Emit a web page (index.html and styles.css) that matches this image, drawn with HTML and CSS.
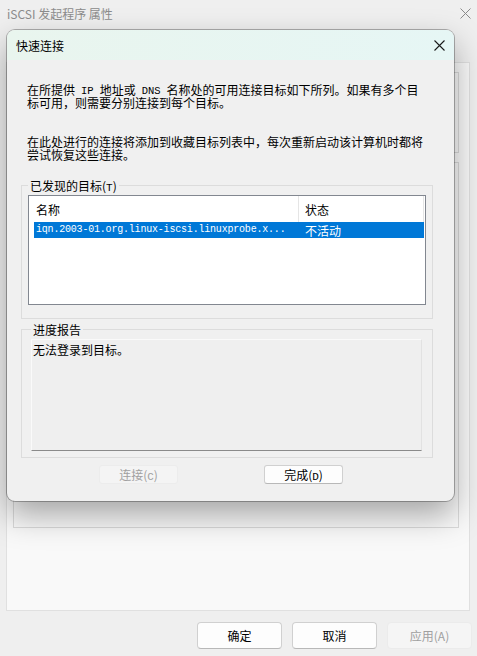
FILE: index.html
```html
<!DOCTYPE html>
<html lang="zh-CN">
<head>
    <meta charset="UTF-8">
    <meta name="viewport" content="width=device-width, initial-scale=1.0">
    <title>iSCSI 发起程序 属性</title>
    <link rel="stylesheet" href="styles.css">
</head>
<body>
    <div class="window">
        <div class="titlebar">
            <span class="title">iSCSI 发起程序 属性</span>
            <svg class="close close-bg" width="11" height="11" viewBox="0 0 11 11">
                <path d="M0.5 0.5 L10.5 10.5 M10.5 0.5 L0.5 10.5" stroke="#8a8a8a" stroke-width="1" fill="none"/>
            </svg>
        </div>
        <div class="panel">
            <div class="bg-group bg-group-top"></div>
            <div class="bg-group bg-group-main"></div>
        </div>
        <div class="footer">
            <button class="btn">确定</button>
            <button class="btn">取消</button>
            <button class="btn" disabled>应用(A)</button>
        </div>

        <div class="dialog">
            <div class="dialog-titlebar">
                <span class="dialog-title">快速连接</span>
                <svg class="close" width="11" height="11" viewBox="0 0 11 11">
                    <path d="M0.5 0.5 L10.5 10.5 M10.5 0.5 L0.5 10.5" stroke="#1a1a1a" stroke-width="1.1" fill="none"/>
                </svg>
            </div>
            <div class="dialog-body">
                <p class="intro">在所提供<span class="mono word">IP</span>地址或<span class="mono word">DNS</span>名称处的可用连接目标如下所列。如果有多个目<br>标可用，则需要分别连接到每个目标。</p>
                <p class="intro second">在此处进行的连接将添加到收藏目标列表中，每次重新启动该计算机时都将<br>尝试恢复这些连接。</p>

                <fieldset class="group">
                    <legend>已发现的目标(<span class="mono">T</span>)</legend>
                    <div class="listbox">
                        <div class="list-header">
                            <span class="col-name">名称</span>
                            <span class="col-state">状态</span>
                        </div>
                        <div class="list-row selected">
                            <span class="col-name mono">iqn.2003-01.org.linux-iscsi.linuxprobe.x...</span>
                            <span class="col-state">不活动</span>
                        </div>
                    </div>
                </fieldset>

                <fieldset class="group progress">
                    <legend>进度报告</legend>
                    <div class="report">无法登录到目标。</div>
                </fieldset>

                <div class="dialog-actions">
                    <button class="btn small" disabled>连接(<span class="mono">C</span>)</button>
                    <button class="btn small">完成(<span class="mono">D</span>)</button>
                </div>
            </div>
        </div>
    </div>
</body>
</html>
```

FILE: styles.css
```css
* {
    box-sizing: border-box;
}

body {
    margin: 0;
    font-family: "Noto Sans CJK SC", "Liberation Sans", sans-serif;
    font-size: 12px;
    color: #000;
    background-color: #efefef;
}

.window {
    position: relative;
    width: 477px;
    height: 656px;
    display: flex;
    flex-direction: column;
    background-color: #efefef;
    overflow: hidden;
}

.titlebar {
    height: 30px;
    display: flex;
    align-items: center;
    justify-content: space-between;
    padding: 0 6px 3px 7px;
}

.title {
    color: #8c8c8c;
    font-size: 12px;
}

.panel {
    margin: 32px 7px 0 6px;
    height: 549px;
    background-color: #f9f9f9;
    border: 1px solid #e0e0e0;
    padding: 9px 10px 0 6px;
    display: flex;
    flex-direction: column;
    gap: 9px;
}

.bg-group {
    border: 1px solid #dadada;
}

.bg-group-top {
    height: 81px;
}

.bg-group-main {
    height: 366px;
}

.footer {
    display: flex;
    justify-content: flex-end;
    gap: 10px;
    padding: 11px 5px 0 0;
}

.btn {
    font-family: "Noto Sans CJK SC", "Liberation Sans", sans-serif;
    font-size: 12px;
    color: #000;
    width: 85px;
    height: 27px;
    background-color: #fdfdfd;
    border: 1px solid #d0d0d0;
    border-bottom-color: #b8b8b8;
    border-radius: 4px;
    padding: 0;
}

.btn:disabled {
    background-color: #f5f5f5;
    border-color: #ebebeb;
    color: #a0a0a0;
}

/* quick connect dialog */
.dialog {
    position: absolute;
    left: 7px;
    top: 30px;
    width: 447px;
    height: 471px;
    background-color: #f0f0f0;
    border-radius: 8px;
    box-shadow: 0 0 0 1px rgba(0, 0, 0, 0.28), 0 14px 32px rgba(0, 0, 0, 0.34);
    overflow: hidden;
}

.dialog-titlebar {
    height: 30px;
    display: flex;
    align-items: center;
    justify-content: space-between;
    padding: 0 9px 0 9px;
    background: linear-gradient(to right, #e9f5ee, #e6f6f5);
}

.dialog-title {
    font-size: 12px;
}

.dialog-body {
    padding: 0 21px 0 14px;
}

.mono {
    font-family: "Liberation Mono", "DejaVu Sans Mono", monospace;
    font-size: 11px;
    line-height: 1;
}

.mono.word {
    display: inline-block;
    font-size: 10.5px;
    height: 10px;
    line-height: 10px;
    padding: 0 6px;
    vertical-align: 1px;
}

.intro {
    margin: 23px 0 0 6px;
    line-height: 13px;
    width: 400px;
}

.intro.second {
    margin-top: 26px;
}

.group {
    margin: 18px 0 0 0;
    padding: 3px 6px 13px 6px;
    border: 1px solid #dcdcdc;
    min-width: 0;
}

.group legend {
    padding: 0 2px;
    height: 13px;
    line-height: 13px;
    font-size: 12px;
}

.listbox {
    height: 110px;
    background-color: #fff;
    border: 1px solid #828790;
    padding: 0 1px 0 5px;
}

.list-header,
.list-row {
    display: flex;
}

.list-header {
    height: 26px;
    align-items: center;
}

.list-header .col-name,
.list-header .col-state {
    border-right: 1px solid #e5e5e5;
}

.col-name {
    width: 265px;
    height: 100%;
    display: flex;
    align-items: center;
    padding-left: 2px;
}

.col-state {
    flex: 1;
    height: 100%;
    display: flex;
    align-items: center;
    padding-left: 6px;
}

.list-row {
    height: 16px;
}

.list-row.selected {
    background-color: #0078d7;
    color: #fff;
}

.list-row .mono {
    font-size: 10px;
    letter-spacing: -0.2px;
}

.group.progress {
    margin-top: 4px;
    padding: 3px 10px 6px 9px;
}

.report {
    height: 112px;
    background-color: #efefef;
    border: 1px solid #e2e2e2;
    border-top-color: #fafafa;
    border-left-color: #fafafa;
    border-bottom-color: #8a8a8a;
    padding: 3px 1px;
    line-height: 14px;
}

.dialog-actions {
    display: flex;
    gap: 86px;
    padding: 7px 0 0 78px;
}

.btn.small {
    width: 79px;
    height: 19px;
    border-radius: 3px;
    font-size: 12px;
    line-height: 17px;
}

.btn.small:disabled {
    background-color: #f4f4f4;
    border-color: #ececec;
}
```
